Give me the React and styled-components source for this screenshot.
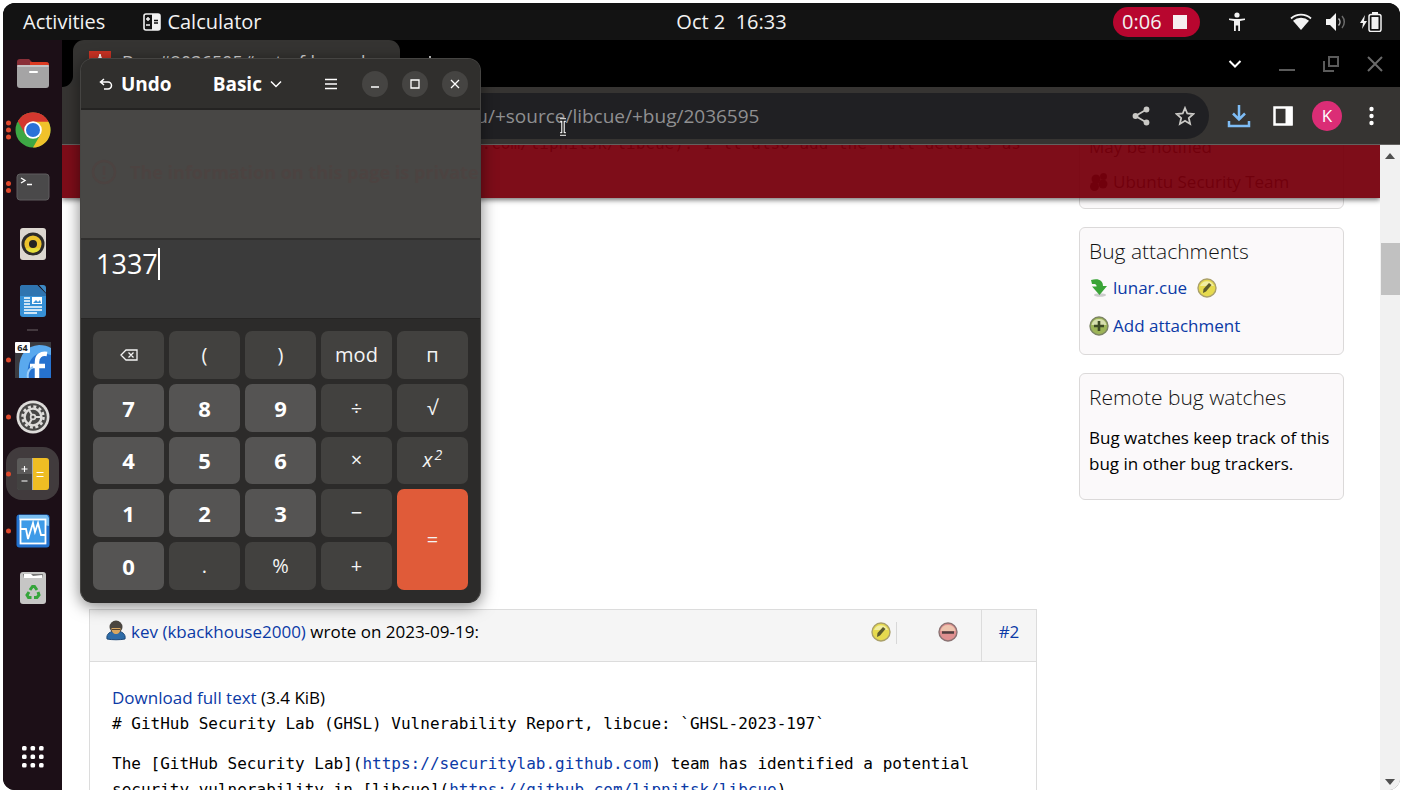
import React from "react";
import styled, { createGlobalStyle, css } from "styled-components";

const sans = `"Open Sans", "Noto Sans", sans-serif`;
const mono = `"DejaVu Sans Mono", monospace`;

const GlobalStyle = createGlobalStyle`
  * { box-sizing: border-box; }
  body { margin: 0; background: #fff; font-family: ${sans}; overflow: hidden; }
  h1, h2, p { margin: 0; }
  button, input { font: inherit; color: inherit; border: 0; padding: 0; margin: 0; background: none; }
  svg { display: block; flex: none; }
`;

/* ---------- desktop ---------- */

const Frame = styled.div`
  height: 100vh;
  padding: 3px 4px 2px 3px;
`;

const Desktop = styled.div`
  position: relative;
  height: 100%;
  display: flex;
  flex-direction: column;
  border-radius: 12px;
  overflow: hidden;
  background: #000;
`;

const TopBar = styled.header`
  height: 37px;
  flex: none;
  display: grid;
  grid-template-columns: calc(50% - 26px) 112px 1fr;
  align-items: center;
  background: #131313;
  color: #f2f2f2;
  font-size: 20px;
  line-height: 24px;
`;

const TopLeft = styled.div`
  display: flex;
  align-items: center;
  gap: 38px;
  padding-left: 20px;
`;

const TopRight = styled.div`
  display: flex;
  align-items: center;
  justify-content: flex-end;
  padding-right: 18px;
`;

const TopButton = styled.button`
  display: flex;
  align-items: center;
  justify-content: center;
  gap: 6px;
  white-space: pre;
`;

const RecordPill = styled.button`
  display: flex;
  align-items: center;
  justify-content: space-between;
  width: 87px;
  height: 30px;
  padding: 0 13px 0 9px;
  margin-right: 28px;
  border-radius: 15px;
  background: #b8062f;
`;

const StopSquare = styled.span`
  width: 14px;
  height: 14px;
  background: #f6eef0;
`;

const StatusIcons = styled.div`
  display: flex;
  align-items: center;
  gap: 14px;
  margin-left: 44px;
`;

const Workspace = styled.div`
  flex: 1;
  min-height: 0;
  display: flex;
`;

/* ---------- dock ---------- */

const Dock = styled.nav`
  width: 59px;
  flex: none;
  display: flex;
  flex-direction: column;
  align-items: center;
  padding: 4px 0 5px;
  background: #1c0f17;
`;

const DockItem = styled.button`
  position: relative;
  width: 59px;
  height: 57px;
  display: flex;
  align-items: center;
  justify-content: center;
`;

const DockTile = styled.span`
  display: flex;
  align-items: center;
  justify-content: center;
  width: 53px;
  height: 53px;
  border-radius: 16px;
  background: ${(p) => (p.$active ? "#413b3d" : "transparent")};
`;

const Dots = styled.span`
  position: absolute;
  left: 3px;
  top: 50%;
  transform: translateY(-50%);
  display: grid;
  gap: 2px;
`;

const Dot = styled.span`
  width: 5px;
  height: 5px;
  border-radius: 50%;
  background: #e0492c;
`;

const DockLine = styled.span`
  width: 11px;
  height: 2px;
  background: #43383e;
`;

const DockFoot = styled.div`
  margin-top: auto;
`;

/* ---------- browser ---------- */

const Browser = styled.section`
  flex: 1;
  min-width: 0;
  display: flex;
  flex-direction: column;
`;

const TabStrip = styled.div`
  height: 47px;
  flex: none;
  display: flex;
  background: #353432;
`;

const StripStart = styled.div`
  width: 11px;
  background: #000;
  border-bottom-right-radius: 11px;
`;

const TabSlot = styled.div`
  background: #000;
`;

const Tab = styled.div`
  width: 327px;
  height: 47px;
  display: flex;
  align-items: center;
  gap: 11px;
  padding: 0 16px 4px;
  border-radius: 11px 11px 0 0;
  background: #353432;
  color: #d8d8d8;
  font-size: 18px;
  white-space: nowrap;
  overflow: hidden;
`;

const StripRest = styled.div`
  flex: 1;
  display: flex;
  align-items: center;
  justify-content: space-between;
  padding: 0 17px 0 22px;
  background: #000;
`;

const WindowButtons = styled.div`
  display: flex;
  align-items: center;
  gap: 28px;
`;

const Toolbar = styled.div`
  height: 58px;
  flex: none;
  display: flex;
  align-items: center;
  padding: 0 14px 0 170px;
  background: #363432;
  border-bottom: 1px solid #63615f;
`;

const AddressBar = styled.div`
  flex: 1;
  height: 46px;
  display: flex;
  align-items: center;
  gap: 14px;
  padding: 0 9px 0 9px;
  border-radius: 23px;
  background: #202023;
`;

const AddressInput = styled.input`
  flex: 1;
  min-width: 0;
  height: 30px;
  color: #8f8f91;
  font-size: 19px;
  outline: none;
`;

const ToolbarIcons = styled.div`
  display: flex;
  align-items: center;
  gap: 14px;
  margin-left: 15px;
`;

const IconButton = styled.button`
  display: flex;
  align-items: center;
  justify-content: center;
`;

const SearchTabsButton = styled(IconButton)`
  margin-right: 9px;
`;

const BarButton = styled(IconButton)`
  width: 30px;
  height: 30px;
`;

const Avatar = styled.button`
  width: 30px;
  height: 30px;
  border-radius: 50%;
  background: #db2d76;
  color: #fff;
  font-size: 17px;
`;

const Viewport = styled.div`
  flex: 1;
  min-height: 0;
  display: flex;
  background: #fff;
`;

const PageArea = styled.div`
  position: relative;
  flex: 1;
  min-width: 0;
  overflow: hidden;
`;

const PrivacyBanner = styled.div`
  position: absolute;
  inset: 0 0 auto 0;
  height: 53px;
  background: rgba(119, 0, 13, 0.95);
  box-shadow: 0 2px 5px rgba(0, 0, 0, 0.55);
`;

const PageGrid = styled.div`
  display: flex;
  gap: 42px;
  margin-top: -15px;
  padding: 0 36px 0 27px;
  color: #000;
  font-size: 17px;
  line-height: 26px;
`;

const Comments = styled.main`
  flex: 1;
  min-width: 0;
`;

const EarlierComment = styled.article`
  min-height: 479px;
  padding: 1px 16px 0 22px;
  text-align: right;
  font: 16px/26px ${mono};
`;

const Comment = styled.article`
  border: 1px solid #dcdcdc;
`;

const CommentHead = styled.header`
  display: flex;
  height: 52px;
  background: #f5f5f5;
  border-bottom: 1px solid #dcdcdc;
`;

const Author = styled.p`
  flex: 1;
  display: flex;
  align-items: flex-start;
  gap: 5px;
  padding: 9px 0 0 16px;
  white-space: pre;
`;

const CommentTools = styled.div`
  display: flex;
  align-items: flex-start;
  padding: 12px 23px 0 0;
`;

const ToolRule = styled.span`
  width: 1px;
  height: 22px;
  margin: 0 41px 0 5px;
  background: #d8d8d8;
`;

const CommentNumber = styled.div`
  width: 55px;
  padding-top: 9px;
  text-align: center;
  border-left: 1px solid #dcdcdc;
`;

const CommentBody = styled.div`
  padding: 23px 22px;
`;

const Code = styled.p`
  font: 16px/26px ${mono};
  white-space: pre-wrap;
  margin-bottom: 14px;
`;

const Link = styled.a`
  color: #0b3aa6;
  text-decoration: none;
`;

const Sidebar = styled.aside`
  width: 265px;
  flex: none;
  display: flex;
  flex-direction: column;
  gap: 18px;
`;

const Card = styled.section`
  display: flex;
  flex-direction: column;
  padding: 9px 9px 13px;
  border: 1px solid #dbd9d9;
  border-radius: 6px;
  background: #fbf9fa;
`;

const NotifyCard = styled(Card)`
  gap: 9px;
  padding-top: 3px;
  padding-bottom: 11px;
`;

const AttachmentCard = styled(Card)`
  gap: 10px;
`;

const WatchCard = styled(Card)`
  gap: 14px;
  padding-bottom: 22px;
`;

const CardTitle = styled.h2`
  font-size: 21px;
  line-height: 28px;
  font-weight: 300;
  color: #111;
`;

const CardRow = styled.div`
  display: flex;
  align-items: center;
  gap: 4px;
  padding-bottom: 2px;
  white-space: nowrap;
`;

const EditButton = styled(IconButton)`
  margin-left: 6px;
`;

const Scrollbar = styled.div`
  width: 20px;
  display: flex;
  flex-direction: column;
  align-items: center;
  justify-content: space-between;
  padding: 8px 0 5px;
  background: #f1f1f1;
`;

const ScrollTrack = styled.div`
  flex: 1;
  align-self: stretch;
  padding: 84px 0 0 1px;
`;

const ScrollThumb = styled.div`
  height: 52px;
  background: #c1c1c1;
`;

/* ---------- calculator ---------- */

const Calculator = styled.section`
  position: absolute;
  left: 77px;
  top: 55px;
  width: 401px;
  border: 1px solid #454442;
  border-bottom-color: #2b2a29;
  border-radius: 13px;
  overflow: hidden;
  background: #2c2b2a;
  color: #fff;
  box-shadow: 0 3px 16px rgba(0, 0, 0, 0.5);
`;

const CalcHeader = styled.header`
  height: 51px;
  display: flex;
  align-items: center;
  padding: 0 12px 0 18px;
  background: #302f2d;
  border-bottom: 2px solid #242322;
`;

const HeaderButton = styled.button`
  display: flex;
  align-items: center;
  gap: 8px;
  margin-right: 41px;
  font-size: 19px;
  line-height: 26px;
  font-weight: 700;
`;

const HeaderTools = styled.div`
  display: flex;
  align-items: center;
  gap: 14px;
  margin-left: auto;
`;

const RoundButton = styled.button`
  width: 26px;
  height: 26px;
  display: flex;
  align-items: center;
  justify-content: center;
  border-radius: 50%;
  background: #454442;
`;

const MenuButton = styled(IconButton)`
  margin-right: 11px;
`;

const History = styled.div`
  height: 128px;
  padding: 49px 0 0 10px;
  display: flex;
  align-items: flex-start;
  gap: 13px;
  background: #484745;
  color: #4c4341;
  font-size: 18px;
  line-height: 26px;
  font-weight: 700;
  white-space: nowrap;
`;

const Entry = styled.div`
  height: 81px;
  display: flex;
  align-items: flex-start;
  padding: 8px 0 0 15px;
  border-top: 2px solid #302f2e;
  border-bottom: 1px solid #262524;
  background: #3b3b3b;
  font-size: 27px;
  line-height: 32px;
`;

const Caret = styled.span`
  width: 2px;
  height: 32px;
  background: #fff;
`;

const Keypad = styled.div`
  height: 283px;
  display: grid;
  grid-template-columns: repeat(5, 1fr);
  grid-template-rows: repeat(5, 1fr);
  gap: 5px;
  padding: 12px;
`;

const Key = styled.button`
  display: flex;
  align-items: center;
  justify-content: center;
  border-radius: 7px;
  font-size: 20px;
  line-height: 26px;
  color: #f4f4f4;
  background: #42413f;
  ${(p) =>
    p.$kind === "digit" &&
    css`
      background: #555453;
      font-size: 22px;
      font-weight: 700;
      color: #fff;
    `}
  ${(p) =>
    p.$kind === "equals" &&
    css`
      grid-row: span 2;
      background: #e05b39;
    `}
`;

const Power = styled.i`
  sup { font-size: 14px; line-height: 14px; margin-left: 2px; }
`;

const Pointer = styled.div`
  position: absolute;
  left: 556px;
  top: 115px;
`;

/* ---------- drawings ---------- */

const CalcGlyph = () => (
  <svg width="18" height="18" viewBox="0 0 18 18">
    <rect x="1" y="1" width="16" height="16" rx="2" fill="none" stroke="#f2f2f2" strokeWidth="1.6" />
    <path d="M9 1h7a1 1 0 0 1 1 1v14a1 1 0 0 1-1 1H9z" fill="#f2f2f2" />
    <path d="M3 6h4M5 4v4M3 12h4" stroke="#f2f2f2" strokeWidth="1.5" />
    <path d="M11 7.500h4M11 10h4" stroke="#131313" strokeWidth="1.3" />
  </svg>
);

const PersonIcon = () => (
  <svg width="18" height="20" viewBox="0 0 18 20" fill="#f2f2f2">
    <circle cx="9" cy="3" r="2.600" />
    <path d="M1 6.500 7 7h4l6-.5v1.600l-5 1V19h-1.800v-5.500H7.800V19H6V9.100l-5-1z" />
  </svg>
);

const WifiIcon = () => (
  <svg width="22" height="18" viewBox="0 0 22 18">
    <path d="M1 5.500a15 15 0 0 1 20 0" fill="none" stroke="#f2f2f2" strokeWidth="1.800" />
    <path d="M3 7.700a12 12 0 0 1 16 0L11 17z" fill="#f2f2f2" />
  </svg>
);

const VolumeIcon = () => (
  <svg width="20" height="20" viewBox="0 0 20 20">
    <path d="M0 7h4l6-6v18l-6-6H0z" fill="#f2f2f2" />
    <path d="M12.500 6.500a5 5 0 0 1 0 7" fill="none" stroke="#b5b5b5" strokeWidth="1.500" />
    <path d="M16 4a9 9 0 0 1 0 12" fill="none" stroke="#6a6a6a" strokeWidth="1.500" />
  </svg>
);

const BatteryIcon = () => (
  <svg width="22" height="20" viewBox="0 0 22 20">
    <path d="M5 3 0 11h3l-1 6 5-8H4z" fill="#f2f2f2" />
    <rect x="9" y="2.500" width="12" height="17" rx="2" fill="none" stroke="#f2f2f2" strokeWidth="1.500" />
    <path d="M12 1h6" stroke="#f2f2f2" strokeWidth="2" />
    <rect x="11.500" y="5" width="7" height="12" fill="#f2f2f2" />
  </svg>
);

const FilesIcon = () => (
  <svg width="34" height="32" viewBox="0 0 34 32">
    <path d="M1 5a3 3 0 0 1 3-3h9l3 3h14a3 3 0 0 1 3 3v6H1z" fill="#8a2f38" />
    <path d="M14 5h16a3 3 0 0 1 3 3v5H14z" fill="#dc3b22" />
    <rect x="1" y="8" width="32" height="23" rx="3" fill="#a5a4a5" />
    <rect x="1" y="8" width="32" height="2" rx="1" fill="#c6c5c6" />
    <rect x="13" y="14" width="9" height="2" rx="1" fill="#fff" />
  </svg>
);

const ChromeIcon = () => (
  <svg width="36" height="36" viewBox="0 0 36 36">
    <circle cx="18" cy="18" r="17.500" fill="#3da744" />
    <path d="M18 18 2.850 9.250A17.500 17.500 0 0 1 33.150 9.250z" fill="#d3382f" />
    <path d="M18 9.500h15.300A17.500 17.500 0 0 1 18 35.500l7.500-13z" fill="#f0c22b" />
    <path d="M2.850 9.250 10.500 22.500 18 9.500 33.300 9.500 A17.500 17.500 0 0 0 2.850 9.250z" fill="#d3382f" />
    <circle cx="18" cy="18" r="8.800" fill="#fff" />
    <circle cx="18" cy="18" r="7" fill="#2a72d8" />
  </svg>
);

const TerminalIcon = () => (
  <svg width="34" height="28" viewBox="0 0 34 28">
    <rect x="1" y="1" width="32" height="26" rx="3" fill="#4a494a" stroke="#5f5d5f" />
    <path d="m5 5 4 2.500L5 10M11 11.500h5" fill="none" stroke="#fff" strokeWidth="1.400" />
  </svg>
);

const RhythmboxIcon = () => (
  <svg width="28" height="34" viewBox="0 0 28 34">
    <rect x="1" y="1" width="26" height="32" rx="3" fill="#dcd7d0" />
    <circle cx="14" cy="17" r="11.500" fill="#2d2c2b" />
    <circle cx="14" cy="17" r="8.600" fill="#ecc32d" />
    <path d="M6.500 21.300a8.600 8.600 0 0 0 15 0z" fill="#e3df3d" />
    <circle cx="14" cy="17" r="4" fill="#252423" />
  </svg>
);

const WriterIcon = () => (
  <svg width="28" height="34" viewBox="0 0 28 34">
    <path d="M1 4a3 3 0 0 1 3-3h14l9 9v20a3 3 0 0 1-3 3H4a3 3 0 0 1-3-3z" fill="#3690d6" />
    <path d="M1 4a3 3 0 0 1 3-3h14l9 9v2H1z" fill="#2f74b0" />
    <path d="M20 1h4a3 3 0 0 1 3 3v5z" fill="#3d89c4" />
    <path d="M5 14h6M5 17h6M5 20h6M5 23h18M5 26h18M5 29h13" stroke="#fff" strokeWidth="1.600" />
    <rect x="13" y="13" width="10" height="7" fill="#fff" />
    <path d="m14 19 3-3 2 2 2-2 1 3z" fill="#3c92d6" />
  </svg>
);

const FedoraIcon = () => (
  <svg width="36" height="36" viewBox="0 0 36 36">
    <rect width="36" height="36" fill="#3b3b40" />
    <path d="M4 36V27C4 12 12 4 24 3c5 0 9 1 12 3v30z" fill="#5aa9ee" />
    <path d="M13 36c-2-14 4-25 15-25l8 2v23z" fill="#2672cf" />
    <path d="M22 36V20c0-6 4-9 10-8M15 24h15" fill="none" stroke="#fff" strokeWidth="4.500" />
    <path d="M13 36c-1-5 1-9 5-11" fill="none" stroke="#9ccdf6" strokeWidth="2" />
    <rect x="0" y="0" width="15" height="11" rx="1" fill="#fff" />
    <text x="7.500" y="9" fontSize="9" fontWeight="700" textAnchor="middle" fill="#222" fontFamily="Open Sans, sans-serif">64</text>
  </svg>
);

const SettingsIcon = () => (
  <svg width="34" height="34" viewBox="0 0 34 34">
    <circle cx="17" cy="17" r="16.500" fill="#dedcda" />
    <circle cx="17" cy="17" r="13.800" fill="#484746" />
    <circle cx="17" cy="17" r="10.500" fill="none" stroke="#dedcda" strokeWidth="2.500" strokeDasharray="3 2.500" />
    <circle cx="17" cy="17" r="8.400" fill="none" stroke="#dedcda" strokeWidth="2.400" />
    <circle cx="17" cy="17" r="3.200" fill="#dedcda" />
    <path d="m17 17-4-7M17 17h8M17 17l-4 7" stroke="#dedcda" strokeWidth="2" />
    <circle cx="17" cy="17" r="1.500" fill="#484746" />
  </svg>
);

const CalculatorIcon = () => (
  <svg width="34" height="34" viewBox="0 0 34 34">
    <rect x="1" y="1" width="32" height="32" rx="3" fill="#5b5a59" />
    <path d="M1 17h16v16H4a3 3 0 0 1-3-3z" fill="#434241" />
    <path d="M17 1h13a3 3 0 0 1 3 3v26a3 3 0 0 1-3 3H17z" fill="#efbd23" />
    <path d="M16.500 1v32" stroke="#aaa" />
    <path d="M5.500 12h6M8.500 9v6M5.500 24h6M20.500 15.500h7M20.500 19.500h7" stroke="#fff" strokeWidth="1.100" />
  </svg>
);

const MonitorIcon = () => (
  <svg width="34" height="34" viewBox="0 0 34 34">
    <rect x=".5" y=".5" width="33" height="33" rx="3" fill="#2272cf" />
    <path d="M3 1h28l2 3v8L3 6z" fill="#79bdf0" />
    <rect x="4.500" y="5.500" width="25" height="24" fill="#3e9be8" stroke="#fff" strokeWidth="1.800" />
    <path d="M5 15h5l2 10 5-16 2 9 3-9 3 12h5" fill="none" stroke="#fff" strokeWidth="1.800" />
  </svg>
);

const TrashIcon = () => (
  <svg width="28" height="34" viewBox="0 0 28 34">
    <rect x="1" y="1" width="26" height="32" rx="3" fill="#c6c6c5" />
    <path d="M4 3h20l-1 4H5z" fill="#777" />
    <path d="M5 3h7l2 2 9-1v3H5z" fill="#fff" />
    <g fill="none" stroke="#35a53b" strokeWidth="3">
      <path d="m11 19 2.500-3.500h2L18 19" />
      <path d="m19 21 1 3-2 2.500h-3" />
      <path d="M12.500 26.500H9.500L8 24l2-3" />
    </g>
  </svg>
);

const AppsIcon = () => (
  <svg width="24" height="24" viewBox="0 0 24 24" fill="#fff">
    {[1, 9.500, 18].flatMap((y) =>
      [1, 9.500, 18].map((x) => <rect key={`${x}-${y}`} x={x} y={y} width="4.600" height="4.600" rx="1.500" />)
    )}
  </svg>
);

const Stroke = ({ w, h = w, d, color = "#fff", width = 1.5 }) => (
  <svg width={w} height={h} viewBox={`0 0 ${w} ${h}`} fill="none" stroke={color} strokeWidth={width}>
    <path d={d} />
  </svg>
);

const ShareIcon = () => (
  <svg width="18" height="20" viewBox="0 0 18 20" fill="#c9c8c5">
    <path d="M14.500 3.500 3.500 10l11 6.500" fill="none" stroke="#c9c8c5" strokeWidth="1.800" />
    <circle cx="14.500" cy="3.500" r="2.900" />
    <circle cx="3.500" cy="10" r="2.900" />
    <circle cx="14.500" cy="16.500" r="2.900" />
  </svg>
);

const StarIcon = () => (
  <svg width="20" height="20" viewBox="0 0 20 20" fill="none" stroke="#c9c8c5" strokeWidth="1.800">
    <path d="m10 2 2.300 5.500 6 .5-4.500 4 1.300 5.900L10 14.800 4.900 17.900l1.300-5.900L1.700 8l6-.5z" />
  </svg>
);

const DownloadIcon = () => (
  <svg width="24" height="24" viewBox="0 0 24 24" fill="none" stroke="#7ebcf5" strokeWidth="2.500">
    <path d="M12 1v14M6 9.500l6 6 6-6M2 17v5h20v-5" />
  </svg>
);

const PanelIcon = () => (
  <svg width="20" height="20" viewBox="0 0 20 20">
    <rect x="1.500" y="1.500" width="17" height="17" fill="none" stroke="#fff" strokeWidth="2.500" />
    <path d="M12.500 1h7v18h-7z" fill="#fff" />
  </svg>
);

const MoreIcon = () => (
  <svg width="5" height="20" viewBox="0 0 5 20" fill="#fff">
    <circle cx="2.500" cy="3" r="2.200" />
    <circle cx="2.500" cy="10" r="2.200" />
    <circle cx="2.500" cy="17" r="2.200" />
  </svg>
);

const Favicon = () => (
  <svg width="22" height="22" viewBox="0 0 22 22">
    <rect width="22" height="22" fill="#cb3324" />
    <path d="m11 3 3 9H8zM4 8l3 3M18 8l-3 3" fill="#fff" stroke="#fff" />
  </svg>
);

const PersonSprite = () => (
  <svg width="20" height="22" viewBox="0 0 20 22">
    <path d="M1 20c-1-5 3-8 9-8s10 3 9 8c-5 1-13 1-18 0z" fill="#2e6ca8" stroke="#1d4877" />
    <circle cx="10" cy="8" r="6.500" fill="#4b4640" />
    <path d="M5.500 9h9c0 4-2 6-4.500 6s-4.500-2-4.500-6z" fill="#d8a760" />
    <path d="M6 10.500h8" stroke="#55402a" />
  </svg>
);

const PencilSprite = () => (
  <svg width="20" height="20" viewBox="0 0 20 20">
    <circle cx="10" cy="10" r="9" fill="#e6da4e" stroke="#aaa06a" strokeWidth="1.400" />
    <path d="M3 8a7.500 7.500 0 0 1 14 0z" fill="#f1eda0" />
    <path d="m6 15 .5-4L12 5l2.500 2L9 13.500z" fill="#5b5a2c" />
  </svg>
);

const RemoveSprite = () => (
  <svg width="20" height="20" viewBox="0 0 20 20">
    <circle cx="10" cy="10" r="9" fill="#df9090" stroke="#8b7373" strokeWidth="1.400" />
    <path d="M2.500 9a7.700 7.700 0 0 1 15 0z" fill="#eec4ae" />
    <path d="M4 10.500h12" stroke="#4f3f3f" strokeWidth="2.500" />
  </svg>
);

const AddSprite = () => (
  <svg width="20" height="20" viewBox="0 0 20 20">
    <circle cx="10" cy="10" r="9" fill="#9db558" stroke="#7c8464" strokeWidth="1.400" />
    <path d="M2.500 9a7.700 7.700 0 0 1 15 0z" fill="#d7dfae" />
    <path d="M5 10h10M10 5v10" stroke="#3e4a26" strokeWidth="2.600" />
  </svg>
);

const ArrowSprite = () => (
  <svg width="20" height="20" viewBox="0 0 20 20">
    <ellipse cx="11" cy="17" rx="6" ry="1.800" fill="#ccc" />
    <path d="M2 2c7-2 12 0 12 6h4l-7.500 9L3 8.500h4.500C8 6 5 6 3 6z" fill="#3aa437" />
  </svg>
);

const TeamSprite = () => (
  <svg width="20" height="20" viewBox="0 0 20 20" fill="#111">
    <circle cx="7" cy="7" r="4.500" />
    <circle cx="14.500" cy="4.500" r="3.500" />
    <circle cx="5.500" cy="14.500" r="4.500" />
    <circle cx="14" cy="12" r="4.500" />
  </svg>
);

const InfoGhost = () => (
  <svg width="26" height="26" viewBox="0 0 26 26" fill="none" stroke="#4c4341" strokeWidth="2.500">
    <circle cx="13" cy="13" r="11" />
    <path d="M13 7v9M13 18v2" />
  </svg>
);

const BackspaceIcon = () => (
  <svg width="18" height="12" viewBox="0 0 18 12" fill="none" stroke="#f4f4f4" strokeWidth="1.300">
    <path d="M6 1h11v10H6L1 6zM8.500 3.500l5 5M13.500 3.500l-5 5" />
  </svg>
);

/* ---------- data ---------- */

const dockApps = [
  { name: "Files", icon: FilesIcon, windows: 0 },
  { name: "Google Chrome", icon: ChromeIcon, windows: 3 },
  { name: "Terminal", icon: TerminalIcon, windows: 2 },
  { name: "Rhythmbox", icon: RhythmboxIcon, windows: 0 },
  { name: "LibreOffice Writer", icon: WriterIcon, windows: 0, line: true },
  { name: "Fedora VM", icon: FedoraIcon, windows: 1 },
  { name: "Settings", icon: SettingsIcon, windows: 1 },
  { name: "Calculator", icon: CalculatorIcon, windows: 1, active: true },
  { name: "System Monitor", icon: MonitorIcon, windows: 1 },
  { name: "Trash", icon: TrashIcon, windows: 0 },
];

const keys = [
  { id: "backspace", label: <BackspaceIcon /> },
  { id: "(" }, { id: ")" }, { id: "mod" }, { id: "π", label: "п" },
  { id: "7", kind: "digit" }, { id: "8", kind: "digit" }, { id: "9", kind: "digit" },
  { id: "÷" }, { id: "√" },
  { id: "4", kind: "digit" }, { id: "5", kind: "digit" }, { id: "6", kind: "digit" },
  { id: "×" },
  { id: "square", label: <Power>x<sup>2</sup></Power> },
  { id: "1", kind: "digit" }, { id: "2", kind: "digit" }, { id: "3", kind: "digit" },
  { id: "−" },
  { id: "=", kind: "equals" },
  { id: "0", kind: "digit" },
  { id: "." }, { id: "%" }, { id: "+" },
];

function DockBar() {
  return (
    <Dock aria-label="Dock">
      {dockApps.map(({ name, icon: Icon, windows, active, line }) => (
        <React.Fragment key={name}>
          <DockItem aria-label={name}>
            {windows > 0 && <Dots>{Array.from({ length: windows }, (_, i) => <Dot key={i} />)}</Dots>}
            <DockTile $active={active}><Icon /></DockTile>
          </DockItem>
          {line && <DockLine />}
        </React.Fragment>
      ))}
      <DockFoot>
        <DockItem aria-label="Show applications"><AppsIcon /></DockItem>
      </DockFoot>
    </Dock>
  );
}

function CalculatorWindow() {
  return (
    <Calculator aria-label="Calculator">
      <CalcHeader>
        <HeaderButton>
          <Stroke w={14} h={12} d="M5 1 1.500 4 5 7M1.500 4H9a3.500 3.500 0 0 1 0 7H5" />
          Undo
        </HeaderButton>
        <HeaderButton>
          Basic
          <Stroke w={12} h={8} d="m1 1.500 5 5 5-5" />
        </HeaderButton>
        <HeaderTools>
          <MenuButton aria-label="Menu"><Stroke w={12} h={12} d="M0 1.500h12M0 6h12M0 10.500h12" width={1.3} /></MenuButton>
          <RoundButton aria-label="Minimize"><Stroke w={10} h={10} d="M1 8h8" /></RoundButton>
          <RoundButton aria-label="Maximize"><Stroke w={10} h={10} d="M1 1h8v8H1z" width={1.3} /></RoundButton>
          <RoundButton aria-label="Close"><Stroke w={10} h={10} d="m1 1 8 8M9 1 1 9" width={1.3} /></RoundButton>
        </HeaderTools>
      </CalcHeader>
      <History><InfoGhost />The information on this page is private</History>
      <Entry>1337<Caret /></Entry>
      <Keypad>
        {keys.map((k) => (
          <Key key={k.id} aria-label={k.id} $kind={k.kind}>{k.label || k.id}</Key>
        ))}
      </Keypad>
    </Calculator>
  );
}

function BugPage() {
  return (
    <PageArea>
      <PageGrid>
        <Comments>
          <EarlierComment>(https://github.com/lipnitsk/libcue). I'll also add the full details as</EarlierComment>
          <Comment>
            <CommentHead>
              <Author>
                <PersonSprite />
                <span><Link href="#kev">kev (kbackhouse2000)</Link> wrote on 2023-09-19:</span>
              </Author>
              <CommentTools>
                <IconButton aria-label="Edit comment"><PencilSprite /></IconButton>
                <ToolRule />
                <IconButton aria-label="Hide comment"><RemoveSprite /></IconButton>
              </CommentTools>
              <CommentNumber><Link href="#2">#2</Link></CommentNumber>
            </CommentHead>
            <CommentBody>
              <p><Link href="#full">Download full text</Link> (3.4 KiB)</p>
              <Code># GitHub Security Lab (GHSL) Vulnerability Report, libcue: `GHSL-2023-197`</Code>
              <Code>
                The [GitHub Security Lab](<Link href="#lab">https://securitylab.github.com</Link>) team has identified a potential{"\n"}
                security vulnerability in [libcue](<Link href="#libcue">https://github.com/lipnitsk/libcue</Link>).
              </Code>
            </CommentBody>
          </Comment>
        </Comments>
        <Sidebar>
          <NotifyCard>
            <p>May be notified</p>
            <CardRow><TeamSprite />Ubuntu Security Team</CardRow>
          </NotifyCard>
          <AttachmentCard>
            <CardTitle>Bug attachments</CardTitle>
            <CardRow>
              <ArrowSprite />
              <Link href="#lunar">lunar.cue</Link>
              <EditButton aria-label="Edit attachment"><PencilSprite /></EditButton>
            </CardRow>
            <CardRow><AddSprite /><Link href="#add">Add attachment</Link></CardRow>
          </AttachmentCard>
          <WatchCard>
            <CardTitle>Remote bug watches</CardTitle>
            <p>Bug watches keep track of this bug in other bug trackers.</p>
          </WatchCard>
        </Sidebar>
      </PageGrid>
      <PrivacyBanner />
    </PageArea>
  );
}

export default function App() {
  return (
    <Frame>
      <GlobalStyle />
      <Desktop>
        <TopBar>
          <TopLeft>
            <TopButton>Activities</TopButton>
            <TopButton><CalcGlyph />Calculator</TopButton>
          </TopLeft>
          <TopButton>{"Oct 2  16:33"}</TopButton>
          <TopRight>
            <RecordPill>0:06<StopSquare /></RecordPill>
            <PersonIcon />
            <StatusIcons><WifiIcon /><VolumeIcon /><BatteryIcon /></StatusIcons>
          </TopRight>
        </TopBar>
        <Workspace>
          <DockBar />
          <Browser>
            <TabStrip>
              <StripStart />
              <TabSlot><Tab><Favicon />Bug #2036595 “out-of-bounds ar…</Tab></TabSlot>
              <StripRest>
                <IconButton aria-label="New tab"><Stroke w={16} d="M8 0v16M0 8h16" color="#ccc" width={2} /></IconButton>
                <WindowButtons>
                  <SearchTabsButton aria-label="Search tabs"><Stroke w={14} h={10} d="m1.500 2 5.500 5.500L12.500 2" width={2} /></SearchTabsButton>
                  <IconButton aria-label="Minimize"><Stroke w={16} d="M0 14h16" color="#5b5b5b" width={2} /></IconButton>
                  <IconButton aria-label="Restore"><Stroke w={16} d="M6 1h9v9H6zM1 5v10h10" color="#5b5b5b" width={2} /></IconButton>
                  <IconButton aria-label="Close"><Stroke w={16} d="m1 1 14 14M15 1 1 15" color="#6a6a6a" width={2} /></IconButton>
                </WindowButtons>
              </StripRest>
            </TabStrip>
            <Toolbar>
              <AddressBar>
                <AddressInput aria-label="Address" readOnly value="bugs.launchpad.net/ubuntu/+source/libcue/+bug/2036595" />
                <BarButton aria-label="Share"><ShareIcon /></BarButton>
                <BarButton aria-label="Bookmark"><StarIcon /></BarButton>
              </AddressBar>
              <ToolbarIcons>
                <BarButton aria-label="Downloads"><DownloadIcon /></BarButton>
                <BarButton aria-label="Side panel"><PanelIcon /></BarButton>
                <Avatar>K</Avatar>
                <BarButton aria-label="More"><MoreIcon /></BarButton>
              </ToolbarIcons>
            </Toolbar>
            <Viewport>
              <BugPage />
              <Scrollbar>
                <svg width="10" height="6" viewBox="0 0 10 6"><path d="M0 6 5 0l5 6z" fill="#505050" /></svg>
                <ScrollTrack><ScrollThumb /></ScrollTrack>
                <svg width="10" height="6" viewBox="0 0 10 6"><path d="m0 0 5 6 5-6z" fill="#505050" /></svg>
              </Scrollbar>
            </Viewport>
          </Browser>
        </Workspace>
        <CalculatorWindow />
        <Pointer>
          <svg width="8" height="18" viewBox="0 0 8 18" fill="none">
            <path d="M1 2h6M4 2v14M1 16h6" stroke="#fff" strokeWidth="3.500" />
            <path d="M1 2h6M4 2v14M1 16h6" stroke="#111" strokeWidth="1.300" />
          </svg>
        </Pointer>
      </Desktop>
    </Frame>
  );
}
